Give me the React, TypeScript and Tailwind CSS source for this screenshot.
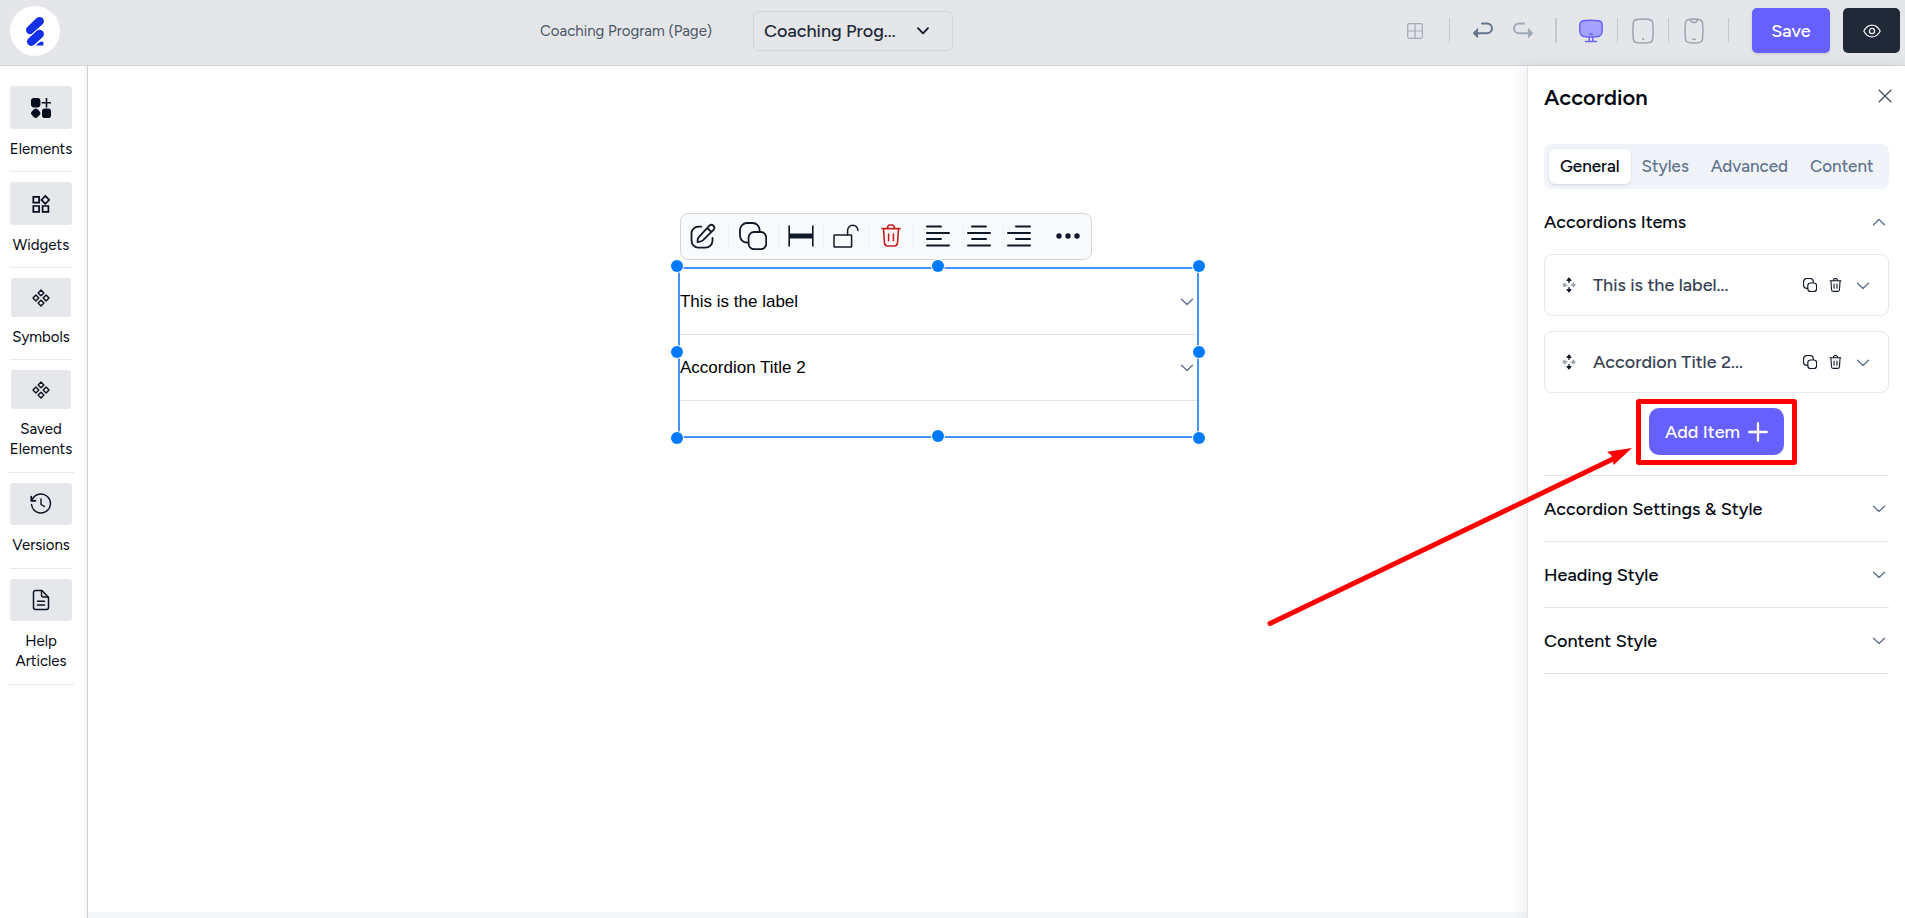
import type { ReactNode } from "react";

type IconProps = { className?: string };

const ChevronDown = ({ className = "" }: IconProps) => (
  <svg width="14" height="8" viewBox="0 0 14 8" fill="none" stroke="currentColor" strokeWidth="1.4" strokeLinecap="round" strokeLinejoin="round" className={className} aria-hidden="true">
    <path d="M1.5 1.2 7 6.6l5.500-5.400" />
  </svg>
);

const Logo = () => (
  <svg width="20" height="30" viewBox="0 0 20 30" aria-hidden="true">
    <g stroke="#1130e8" strokeLinecap="round" strokeWidth="8.600">
      <path d="M5.300 14 14.600 5.200" />
      <path d="M6.300 25.600 14.600 18" />
    </g>
    <path d="M4.500 20.300 16 10.300" stroke="white" strokeWidth="1" />
    <path d="M10.600 29.800c1.800-2.400 4-4.600 6.200-4.600 2.600 0 2.800 4.600 0 4.600z" fill="#1130e8" stroke="white" strokeWidth=".5" />
  </svg>
);

const ElementsIcon = () => (
  <svg width="20" height="20" viewBox="0 0 20 20" fill="#030a1c" aria-hidden="true">
    <rect x="0" y="0" width="9.400" height="9.400" rx="2.800" />
    <rect x="11" y="10.600" width="9" height="9.400" rx="2.800" />
    <path d="M3 11.200q1.700-1.600 3.400 0l2.300 2.300q1.500 1.700 0 3.400l-2.300 2.300q-1.700 1.600-3.400 0L.8 16.900q-1.600-1.700 0-3.400z" />
    <path d="M15.500.6v8.400M11.300 4.800h8.400" stroke="#030a1c" strokeWidth="1.600" strokeLinecap="round" />
  </svg>
);

const WidgetsIcon = () => (
  <svg width="18" height="18" viewBox="0 0 18 18" fill="none" stroke="#030a1c" strokeWidth="1.700" aria-hidden="true">
    <path d="M1.300 1.800h5.800v5.800H1.300zM1.300 11h5.800v5.800H1.300zM10.600 11h5.800v5.800h-5.800zM13.300.9l3.900 4-3.900 4-3.900-4z" />
  </svg>
);

const DiamondsIcon = () => (
  <svg width="18" height="18" viewBox="0 0 18 18" fill="none" stroke="#0b1222" strokeWidth="1.400" strokeLinejoin="round" aria-hidden="true">
    <path d="M9 1 11.900 3.900 9 6.800 6.100 3.900zM9 11.200l2.900 2.900L9 17l-2.900-2.900zM3.900 6.100 6.800 9l-2.900 2.900L1 9zM14.100 6.100 17 9l-2.900 2.900L11.200 9z" />
  </svg>
);

const VersionsIcon = () => (
  <svg width="22" height="22" viewBox="0 0 22 22" fill="none" stroke="#0b1222" strokeWidth="1.400" strokeLinecap="round" strokeLinejoin="round" aria-hidden="true">
    <path d="M2.100 7A9.500 9.500 0 1 1 1.500 11.500" />
    <path d="M1.300 3.600v4.200h4.200" strokeWidth="1.800" />
    <path d="M11 6v5.500l3.300 1.900" />
  </svg>
);

const ArticleIcon = () => (
  <svg width="18" height="22" viewBox="0 0 18 22" fill="none" stroke="#0b1222" strokeWidth="1.500" strokeLinecap="round" strokeLinejoin="round" aria-hidden="true">
    <path d="M10 1.500H3.500a2 2 0 0 0-2 2v15a2 2 0 0 0 2 2h11a2 2 0 0 0 2-2V8.500z" />
    <path d="M9.500 1.800v4.200a2 2 0 0 0 2 2h4.500M5.500 12.300h7M5.500 16h7" />
  </svg>
);

const GridIcon = () => (
  <svg width="16" height="16" viewBox="0 0 16 16" fill="none" stroke="#a3a9b5" strokeWidth="1.200" aria-hidden="true">
    <rect x=".7" y=".7" width="14.600" height="14.600" rx="1.500" />
    <path d="M8 .7v14.600M.7 8h14.600" />
  </svg>
);

const UndoIcon = ({ className = "" }: IconProps) => (
  <svg width="20" height="17" viewBox="0 0 20 17" fill="none" stroke="currentColor" strokeWidth="2" strokeLinecap="round" className={className} aria-hidden="true">
    <path d="M9 1.400h5a4.900 4.900 0 0 1 0 9.900H5" />
    <path d="M4.600 7v8.600L.8 12q-.8-.7 0-1.400z" fill="currentColor" strokeWidth="1" strokeLinejoin="round" />
  </svg>
);

const MonitorIcon = () => (
  <svg width="24" height="24" viewBox="0 0 24 24" fill="none" stroke="#6863fa" strokeWidth="1.500" strokeLinecap="round" aria-hidden="true">
    <path d="M12 1.200c7.500 0 10.300.6 10.800 3 .5 3 .5 7 0 10-.6 3-2.600 3.800-10.800 3.800S1.800 17.200 1.200 14.200c-.5-3-.5-7 0-10 .5-2.400 3.300-3 10.800-3z" fill="#a5a1ff" />
    <path d="M10.600 15h2.800M10.300 18.500v3.500M13.700 18.500v3.500M6.500 22.400h11" />
  </svg>
);

const TabletIcon = () => (
  <svg width="22" height="26" viewBox="0 0 22 26" fill="none" stroke="#9ca3af" strokeWidth="1.500" strokeLinecap="round" aria-hidden="true">
    <path d="M11 1c7.200 0 9.200.8 9.600 3.200.6 5 .6 12.600 0 17.600-.4 2.400-2.400 3.200-9.600 3.200s-9.200-.8-9.600-3.200c-.6-5-.6-12.600 0-17.600C1.800 1.800 3.800 1 11 1z" />
    <path d="M11 21h.1" strokeWidth="2" />
  </svg>
);

const PhoneIcon = () => (
  <svg width="20" height="26" viewBox="0 0 20 26" fill="none" stroke="#9ca3af" strokeWidth="1.500" strokeLinecap="round" aria-hidden="true">
    <path d="M10 1c5.800 0 8 .8 8.400 3.200.6 5 .6 12.600 0 17.600C18 24.200 15.800 25 10 25s-8-.8-8.400-3.200c-.6-5-.6-12.600 0-17.600C2 1.800 4.200 1 10 1z" />
    <path d="M6.500 1.500C6.700 4 7.500 4.600 10 4.600s3.300-.6 3.500-3.100M8.800 21.200h2.400" />
  </svg>
);

const EyeIcon = () => (
  <svg width="18" height="14" viewBox="0 0 18 14" fill="none" stroke="#f3f4f6" strokeWidth="1.200" strokeLinejoin="round" aria-hidden="true">
    <path d="M.8 7C2.600 3.500 5.400 1.100 9 1.100S15.400 3.500 17.200 7c-1.800 3.500-4.600 5.900-8.200 5.900S2.600 10.500.8 7z" />
    <circle cx="9" cy="7" r="2.600" />
  </svg>
);

const EditIcon = () => (
  <svg width="26" height="26" viewBox="0 0 26 26" fill="none" stroke="#111827" strokeWidth="1.800" strokeLinecap="round" strokeLinejoin="round" aria-hidden="true">
    <path d="M11.300 3.600H8.500a7 7 0 0 0-7 7v7a7 7 0 0 0 7 7h7a7 7 0 0 0 7-7v-2.800" />
    <path d="M8.800 14.200 19.400 2.700a2.900 2.900 0 0 1 4.100 4.100L12.800 17.400q-1.600 1.500-5.200 1.700-.4-3 1.200-4.900zM17.300 5l3.900 3.900" />
  </svg>
);

const CopyIcon = ({ className = "" }: IconProps) => (
  <svg viewBox="0 0 28 28" fill="none" stroke="currentColor" strokeLinecap="round" strokeLinejoin="round" className={className} aria-hidden="true">
    <path d="M20.600 9V8a7 7 0 0 0-7-7H8a7 7 0 0 0-7 7v5.600a7 7 0 0 0 7 7h1.300" />
    <rect x="9.600" y="10" width="17.600" height="17.200" rx="5.500" />
  </svg>
);

const TrashIcon = ({ className = "" }: IconProps) => (
  <svg viewBox="0 0 20 23" fill="none" stroke="currentColor" strokeLinecap="round" strokeLinejoin="round" className={className} aria-hidden="true">
    <path d="M1 4.600h18M2.500 5l1 14.200c.2 2 1.300 2.800 3.300 2.800h6.400c2 0 3.100-.8 3.300-2.800l1-14.200M6.300 4.400C6.700 2 7.300 1 8.600 1h2.800c1.300 0 1.900 1 2.300 3.400M7.600 10v6.800M12.400 10v6.800" />
  </svg>
);

const WidthIcon = () => (
  <svg width="26" height="22" viewBox="0 0 26 22" fill="none" stroke="#111827" aria-hidden="true">
    <path d="M1.200 1v20M24.800 1v20" strokeWidth="1.600" strokeLinecap="round" />
    <path d="M1.200 11h23.600" strokeWidth="5" />
  </svg>
);

const UnlockIcon = () => (
  <svg width="26" height="24" viewBox="0 0 26 24" fill="none" stroke="#111827" strokeWidth="1.500" aria-hidden="true">
    <rect x="1" y="11" width="17.600" height="12" rx=".6" />
    <path d="M14.600 11V6.400a5.100 5.100 0 0 1 10.300 0" strokeLinecap="round" />
  </svg>
);

const AlignIcon = ({ kind }: { kind: "left" | "center" | "right" }) => {
  const d = {
    left: "M1 1.500h14M1 14h14",
    center: "M5 1.500h14M5 14h14",
    right: "M9 1.500h14M9 14h14",
  }[kind];
  return (
    <svg width="24" height="22" viewBox="0 0 24 22" fill="none" stroke="#111827" strokeWidth="2" strokeLinecap="round" aria-hidden="true">
      <path d={d} />
      <path d="M1 8h22M1 20.500h22" />
    </svg>
  );
};

const DotsIcon = () => (
  <svg width="24" height="6" viewBox="0 0 24 6" fill="#111827" aria-hidden="true">
    <circle cx="3" cy="3" r="2.700" />
    <circle cx="12" cy="3" r="2.700" />
    <circle cx="21" cy="3" r="2.700" />
  </svg>
);

const MoveIcon = () => (
  <svg width="14" height="16" viewBox="0 0 14 16" fill="none" strokeWidth="1.400" strokeLinecap="round" strokeLinejoin="round" aria-hidden="true">
    <g stroke="#101828" fill="#101828">
      <path d="M7 1.300 8.800 3.400H5.200zM7 3.400v2M7 14.700l1.800-2.100H5.200zM7 12.600v-2" />
    </g>
    <g stroke="#9ca3af" fill="#9ca3af">
      <path d="M1 8l1.900-1.600v3.200zM2.900 8h2M13 8l-1.900-1.600v3.200zM11.100 8h-2" />
    </g>
  </svg>
);

const CloseIcon = () => (
  <svg width="14" height="14" viewBox="0 0 14 14" fill="none" stroke="#4b5563" strokeWidth="1.400" strokeLinecap="round" aria-hidden="true">
    <path d="M1.200 1.200 12.800 12.800M12.800 1.200 1.200 12.800" />
  </svg>
);

const PlusIcon = () => (
  <svg width="20" height="20" viewBox="0 0 20 20" fill="none" stroke="white" strokeWidth="2.300" strokeLinecap="round" aria-hidden="true">
    <path d="M10 1.200v17.600M1.200 10h17.600" />
  </svg>
);

const Divider = ({ className = "w-px" }: IconProps) => <span className={`h-[25px] shrink-0 bg-[#c5c9d1] ${className}`} />;

function Header() {
  return (
    <header className="flex h-[66px] shrink-0 items-center justify-between border-b border-gray-300 bg-[#e5e6ea] pr-[5px] pb-1 pl-2.5">
      <a href="#home" aria-label="Home" className="flex size-[50px] items-center justify-center rounded-full bg-white">
        <Logo />
      </a>
      <div className="ml-[26px] flex items-center">
        <label htmlFor="page" className="w-[213px] pt-px text-[15px] text-gray-600">
          Coaching Program (Page)
        </label>
        <div className="relative">
          <select id="page" className="h-10 w-[200px] appearance-none rounded-md border border-gray-300 bg-transparent pl-2.5 text-lg font-medium text-gray-800">
            <option>Coaching Prog...</option>
          </select>
          <svg width="12" height="8" viewBox="0 0 12 8" fill="none" stroke="#111827" strokeWidth="1.800" strokeLinecap="round" strokeLinejoin="round" className="pointer-events-none absolute top-4 right-6" aria-hidden="true">
            <path d="M1 1.200 6 6.400l5-5.200" />
          </svg>
        </div>
      </div>
      <div className="flex items-center">
        <button aria-label="Grid" className="mr-[26px]"><GridIcon /></button>
        <Divider />
        <button aria-label="Undo" className="mr-5 ml-[23px] text-[#64748b]"><UndoIcon /></button>
        <button aria-label="Redo" className="mr-[22px] text-[#a0a9b7]"><UndoIcon className="-scale-x-100" /></button>
        <Divider className="w-0.5" />
        <button aria-label="Desktop" className="mr-3.5 ml-[22px]"><MonitorIcon /></button>
        <Divider />
        <button aria-label="Tablet" className="mx-3.5"><TabletIcon /></button>
        <Divider />
        <button aria-label="Phone" className="mr-6 ml-[15px]"><PhoneIcon /></button>
        <Divider />
        <button className="mr-[13px] ml-[23px] h-[45px] w-[78px] rounded-[5px] bg-[#6660ff] text-lg font-medium text-white shadow-sm">Save</button>
        <button aria-label="Preview" className="flex h-[45px] w-[57px] items-center justify-center rounded-[5px] bg-[#1f2937]"><EyeIcon /></button>
      </div>
    </header>
  );
}

const sideItems: { label: string; icon: ReactNode; item: string; button: string }[] = [
  { label: "Elements", icon: <ElementsIcon />, item: "w-[62px] pb-3", button: "h-[43px] w-[62px]" },
  { label: "Widgets", icon: <WidgetsIcon />, item: "w-[62px] pb-3", button: "h-[43px] w-[62px]" },
  { label: "Symbols", icon: <DiamondsIcon />, item: "w-[60px] pb-3", button: "h-[39px] w-[60px]" },
  { label: "Saved Elements", icon: <DiamondsIcon />, item: "w-[66px] pb-[13px]", button: "h-[39px] w-[60px]" },
  { label: "Versions", icon: <VersionsIcon />, item: "w-[62px] pb-[13px]", button: "h-[42px] w-[62px]" },
  { label: "Help Articles", icon: <ArticleIcon />, item: "w-[66px] pb-[13px]", button: "h-[42px] w-[62px]" },
];

function Sidebar() {
  return (
    <nav className="flex w-[88px] shrink-0 flex-col items-center gap-2.5 border-r border-[#cfd0d4] pt-5 pr-[5px] shadow-[inset_-4px_0_4px_-3px_rgba(0,0,0,0.08)]">
      {sideItems.map((s) => (
        <button key={s.label} className={`flex flex-col items-center gap-2.5 border-b border-gray-200 ${s.item}`}>
          <span className={`flex items-center justify-center rounded-[3px] bg-gray-200 ${s.button}`}>{s.icon}</span>
          <span className="text-[15px] leading-5 text-gray-950">{s.label}</span>
        </button>
      ))}
    </nav>
  );
}

function ElementToolbar() {
  const cell = "flex h-[30px] items-center border-r border-[#eef0f3]";
  return (
    <div className="flex h-[47px] w-[412px] items-center rounded-lg border border-gray-300 bg-[#f9fafc] pb-0.5">
      <button aria-label="Edit" className={`${cell} w-12 pl-[9px]`}><EditIcon /></button>
      <button aria-label="Duplicate" className={`${cell} w-[50px] justify-center text-gray-900`}><CopyIcon className="size-7 stroke-[1.800]" /></button>
      <button aria-label="Full width" className={`${cell} w-[45px] justify-center`}><WidthIcon /></button>
      <button aria-label="Unlock" className={`${cell} w-[45px] justify-center`}><UnlockIcon /></button>
      <button aria-label="Delete" className={`${cell} w-[45px] justify-center text-[#c51f1f]`}><TrashIcon className="h-[23px] w-5 stroke-[1.600]" /></button>
      <button aria-label="Align left" className={`${cell} w-[50px] justify-center`}><AlignIcon kind="left" /></button>
      <button aria-label="Align center" className={`${cell} w-10 pl-[3px]`}><AlignIcon kind="center" /></button>
      <button aria-label="Align right" className="flex h-[30px] w-[52px] items-center pl-[3px]"><AlignIcon kind="right" /></button>
      <button aria-label="More"><DotsIcon /></button>
    </div>
  );
}

const handles = [
  "-top-[9px] -left-[9px]",
  "-top-[9px] left-1/2 -translate-x-1/2",
  "-top-[9px] -right-2",
  "top-[77px] -left-[9px]",
  "top-[77px] -right-2",
  "-bottom-2 -left-[9px]",
  "-bottom-1.5 left-1/2 -translate-x-1/2",
  "-bottom-2 -right-2",
];

function Canvas() {
  return (
    <main className="flex min-w-0 flex-1 flex-col">
      <div className="flex-1 pt-[147px]">
        <div className="ml-[41%] w-[521px]">
          <div className="ml-0.5">
            <ElementToolbar />
          </div>
          <section className="relative mt-[7px] h-[171px] border-2 border-[#4791ff] font-['Liberation_Sans',Arial,sans-serif] text-[17px] text-black">
            {["This is the label", "Accordion Title 2"].map((t) => (
              <button key={t} className="flex h-[66px] w-full items-center justify-between border-b border-[#dfe5ee] pr-[3px]">
                <span>{t}</span>
                <ChevronDown className="text-slate-500" />
              </button>
            ))}
            {handles.map((h) => (
              <span key={h} className={`absolute size-3 rounded-full bg-[#007bff] ring-1 ring-white ${h}`} />
            ))}
          </section>
        </div>
      </div>
      <div className="h-1.5 bg-[#f5f6f8]" />
    </main>
  );
}

function ItemCard({ title }: { title: string }) {
  return (
    <li className="flex h-[62px] items-center rounded-lg border border-gray-200 pr-[18px] pl-[17px]">
      <button aria-label="Move"><MoveIcon /></button>
      <span className="ml-[17px] flex-1 text-lg font-medium text-gray-700">{title}</span>
      <button aria-label="Duplicate item" className="text-gray-900"><CopyIcon className="size-3.5 stroke-[2.400]" /></button>
      <button aria-label="Delete item" className="mr-3.5 ml-3 text-gray-900"><TrashIcon className="h-3.5 w-[13px] stroke-[1.800]" /></button>
      <button aria-label="Expand item" className="pt-0.5"><ChevronDown className="text-slate-500" /></button>
    </li>
  );
}

function AddItemCallout() {
  return (
    <div className="pointer-events-none absolute -inset-x-[13px] -top-[9px] -bottom-2.5 rounded-[3px] border-[5px] border-[#ff0000]">
      <svg width="372" height="192" viewBox="0 0 372 192" className="absolute top-9 right-full mr-1 max-w-none" aria-hidden="true">
        <path d="M5 183.500 350 18" stroke="#ff0000" strokeWidth="5" strokeLinecap="round" />
        <path d="M367 8 342 11.700l4.500 3.800 2.200 9.500z" fill="#ff0000" />
      </svg>
    </div>
  );
}

const tabs = ["General", "Styles", "Advanced", "Content"];

function Panel() {
  return (
    <aside className="relative w-[378px] shrink-0 border-l border-[#e2e5f0] bg-white px-4 shadow-[-4px_0_16px_rgba(0,0,0,0.07)]">
      <div className="flex h-[78px] items-start justify-between pt-4">
        <h2 className="text-[22px] leading-8 font-semibold text-gray-950">Accordion</h2>
        <button aria-label="Close" className="mt-[7px] mr-[-3px]"><CloseIcon /></button>
      </div>
      <div role="tablist" className="flex h-[45px] items-center rounded-lg bg-[#f0f4f9] p-[5px] text-[17px] font-medium">
        {tabs.map((t, i) => (
          <button key={t} role="tab" aria-selected={i === 0} className={i === 0 ? "h-[35px] rounded-md bg-white px-[11px] text-gray-950 shadow-sm" : "h-[35px] px-[11px] text-slate-500"}>
            {t}
          </button>
        ))}
      </div>
      <button className="flex h-[65px] w-full items-center justify-between pr-[3px] text-lg font-medium text-gray-950">
        Accordions Items
        <ChevronDown className="rotate-180 text-slate-500" />
      </button>
      <ul className="flex flex-col gap-[15px]">
        <ItemCard title="This is the label..." />
        <ItemCard title="Accordion Title 2..." />
      </ul>
      <div className="flex justify-center border-b border-[#e2e5f0] pt-[15px] pb-5">
        <div className="relative">
          <button className="flex h-[47px] w-[135px] items-center justify-center gap-2 rounded-[10px] bg-[#6660ff] text-lg font-medium text-white">
            Add Item
            <PlusIcon />
          </button>
          <AddItemCallout />
        </div>
      </div>
      {["Accordion Settings & Style", "Heading Style", "Content Style"].map((t) => (
        <button key={t} className="flex h-[66px] w-full items-center justify-between border-b border-[#e2e5f0] pr-[3px] text-lg font-medium text-gray-950">
          {t}
          <ChevronDown className="text-slate-500" />
        </button>
      ))}
    </aside>
  );
}

export default function App() {
  return (
    <div className="flex min-h-screen flex-col bg-white font-['Figtree',Inter,sans-serif]">
      <Header />
      <div className="flex flex-1">
        <Sidebar />
        <Canvas />
        <Panel />
      </div>
    </div>
  );
}
